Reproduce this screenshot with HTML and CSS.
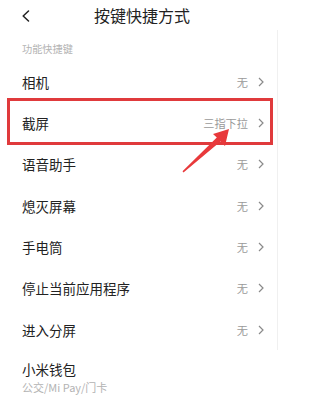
FILE: index.html
```html
<!DOCTYPE html>
<html lang="zh-CN">
<head>
<meta charset="utf-8">
<title>按键快捷方式</title>
<link rel="stylesheet" href="styles.css">
</head>
<body>
<div class="page">
  <header class="topbar">
    <span class="back">
      <svg width="8" height="12" viewBox="0 0 8 12"><path d="M6.5 1 L1.2 6 L6.5 11" fill="none" stroke="#222" stroke-width="1.5" stroke-linecap="round" stroke-linejoin="round"/></svg>
    </span>
    <h1 class="title">按键快捷方式</h1>
    <span></span>
  </header>
  <div class="card">
    <div class="section-label">功能快捷键</div>
    <div class="row"><span class="name">相机</span><span class="value">无</span><svg class="chev" width="6" height="10" viewBox="0 0 6 10"><path d="M1 1 L5 5 L1 9" fill="none" stroke="#8a8a8a" stroke-width="1.2"/></svg></div>
    <div class="row"><span class="name">截屏</span><span class="value">三指下拉</span><svg class="chev" width="6" height="10" viewBox="0 0 6 10"><path d="M1 1 L5 5 L1 9" fill="none" stroke="#8a8a8a" stroke-width="1.2"/></svg></div>
    <div class="row"><span class="name">语音助手</span><span class="value">无</span><svg class="chev" width="6" height="10" viewBox="0 0 6 10"><path d="M1 1 L5 5 L1 9" fill="none" stroke="#8a8a8a" stroke-width="1.2"/></svg></div>
    <div class="row"><span class="name">熄灭屏幕</span><span class="value">无</span><svg class="chev" width="6" height="10" viewBox="0 0 6 10"><path d="M1 1 L5 5 L1 9" fill="none" stroke="#8a8a8a" stroke-width="1.2"/></svg></div>
    <div class="row"><span class="name">手电筒</span><span class="value">无</span><svg class="chev" width="6" height="10" viewBox="0 0 6 10"><path d="M1 1 L5 5 L1 9" fill="none" stroke="#8a8a8a" stroke-width="1.2"/></svg></div>
    <div class="row"><span class="name">停止当前应用程序</span><span class="value">无</span><svg class="chev" width="6" height="10" viewBox="0 0 6 10"><path d="M1 1 L5 5 L1 9" fill="none" stroke="#8a8a8a" stroke-width="1.2"/></svg></div>
    <div class="row"><span class="name">进入分屏</span><span class="value">无</span><svg class="chev" width="6" height="10" viewBox="0 0 6 10"><path d="M1 1 L5 5 L1 9" fill="none" stroke="#8a8a8a" stroke-width="1.2"/></svg></div>
  </div>
  <div class="row-two">
    <div class="name">小米钱包</div>
    <div class="sub">公交/Mi Pay/门卡</div>
  </div>

  <div class="highlight"></div>
  <svg class="pointer" width="281" height="414" viewBox="0 0 281 414">
    <polygon points="229,129 225,146 220.5,141.5 183.5,172.5 182.5,171.2 216.8,137.6 213,134" fill="#e8393b"/>
  </svg>
</div>
</body>
</html>
```

FILE: styles.css
```css
html, body {
  margin: 0;
  padding: 0;
  background: #fff;
}

body {
  font-family: "Noto Sans CJK SC", "Noto Sans", sans-serif;
  color: #222;
  width: 281px;
  height: 414px;
  overflow: hidden;
}

.page {
  position: relative;
  width: 281px;
  height: 414px;
}

.topbar {
  height: 30px;
  display: grid;
  grid-template-columns: 1fr auto 1fr;
  align-items: center;
}

.back {
  display: flex;
  align-items: center;
  padding-left: 22px;
  padding-top: 1px;
}

.title {
  margin: 0;
  font-size: 16px;
  font-weight: 400;
  color: #222;
  line-height: 20px;
  padding-left: 3px;
}

.card {
  margin-right: 3px;
  border-right: 1px solid #f0f0f0;
}

.section-label {
  padding: 10px 0 3px 22px;
  font-size: 10.2px;
  line-height: 18px;
  color: #b3b3b3;
}

.row {
  height: 41.33px;
  display: flex;
  align-items: center;
  padding: 0 13px 0 22px;
}

.name {
  flex: 1;
  font-size: 13.5px;
  line-height: 18px;
  color: #222;
}

.value {
  font-size: 11.2px;
  color: #9a9a9a;
  margin-right: 10px;
}

.chev {
  display: block;
}

.row-two {
  padding: 10px 16px 0 22px;
}

.row-two .name {
  line-height: 18px;
}

.sub {
  margin-top: 1px;
  font-size: 11px;
  line-height: 16px;
  color: #b3b3b3;
}

.highlight {
  position: absolute;
  left: 7px;
  top: 98px;
  width: 260px;
  height: 41px;
  border: 3px solid #e03a3c;
}

.pointer {
  position: absolute;
  left: 0;
  top: 0;
  pointer-events: none;
}
```
